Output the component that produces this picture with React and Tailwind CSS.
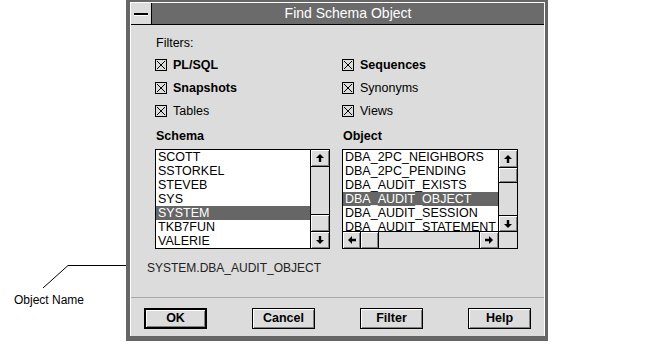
const font = { fontFamily: '"Liberation Sans", Arial, sans-serif' };

const schemas = ["SCOTT", "SSTORKEL", "STEVEB", "SYS", "SYSTEM", "TKB7FUN", "VALERIE"];
const objects = [
  "DBA_2PC_NEIGHBORS",
  "DBA_2PC_PENDING",
  "DBA_AUDIT_EXISTS",
  "DBA_AUDIT_OBJECT",
  "DBA_AUDIT_SESSION",
  "DBA_AUDIT_STATEMENT",
];

const bevel = "bg-[#dcdcdc] shadow-[inset_1px_1px_0_#fff,inset_-1px_-1px_0_#808080]";

function Arrow({ dir }) {
  const rot = { up: 0, down: 180, left: 270, right: 90 }[dir];
  return (
    <svg width="8" height="8" viewBox="0 0 8 8" style={{ transform: `rotate(${rot}deg)` }}>
      <path d="M4 0 L8 4 H5.2 V8 H2.8 V4 H0 Z" fill="black" />
    </svg>
  );
}

function Check({ label, bold }) {
  return (
    <div className="flex items-center gap-[6px] h-[14px]">
      <svg width="12" height="12" viewBox="0 0 12 12">
        <rect x="0.5" y="0.5" width="11" height="11" fill="none" stroke="black" />
        <path d="M2 2 L10 10 M10 2 L2 10" stroke="black" strokeWidth="1" />
      </svg>
      <span className={`text-[12.5px] leading-[14px] ${bold ? "font-bold" : ""}`}>{label}</span>
    </div>
  );
}

function Row({ text, selected }) {
  return (
    <div
      className={`h-[14px] leading-[14px] text-[12.5px] pl-[2px] whitespace-nowrap ${
        selected ? "bg-[#666] text-white" : "text-black"
      }`}
    >
      {text}
    </div>
  );
}

function Button({ label, isDefault }) {
  return (
    <div
      className={`w-[63px] h-[21px] flex items-center justify-center text-[12.5px] font-bold ${bevel} ${
        isDefault ? "border-2 border-black" : "border border-black"
      }`}
    >
      {label}
    </div>
  );
}

export default function App() {
  return (
    <div className="w-[656px] h-[344px] bg-white flex items-start text-black" style={font}>
      {/* callout */}
      <div className="w-[126px] flex flex-col">
        <svg width="126" height="293" viewBox="0 0 126 293" className="block">
          <path d="M43 288 L68 265.5 H126" fill="none" stroke="black" strokeWidth="1" />
        </svg>
        <div className="pl-[14px] text-[12px] leading-[14px]">Object Name</div>
      </div>

      {/* dialog */}
      <div className="w-[422px] h-[341px] bg-[#666] pt-[2px] pl-[4px] pr-[3px] pb-[5px] flex">
        <div className="flex-1 border border-white border-b-0 flex flex-col bg-[#dcdcdc]">
          {/* title bar */}
          <div className="h-[22px] flex border-b border-black">
            <div className="w-[21px] border-r border-black bg-[#dcdcdc] flex items-center justify-center">
              <div className="w-[14px] h-[2px] bg-black shadow-[0_1px_0_#fff]" />
            </div>
            <div className="flex-1 bg-[#6b6b6b] text-white text-[14px] flex items-center justify-center">
              Find Schema Object
            </div>
          </div>

          {/* body */}
          <div className="pl-[24px] pt-[11px] flex flex-col">
            <div className="ml-[1px] text-[12.5px] leading-[14px]">Filters:</div>
            <div className="grid grid-cols-[187px_1fr] gap-y-[9px] mt-[8px]">
              <Check label="PL/SQL" bold />
              <Check label="Sequences" bold />
              <Check label="Snapshots" bold />
              <Check label="Synonyms" />
              <Check label="Tables" />
              <Check label="Views" />
            </div>

            <div className="flex gap-[12px] mt-[11px]">
              {/* schema */}
              <div className="flex flex-col">
                <div className="ml-[1px] h-[14px] leading-[14px] text-[12.5px] font-bold">Schema</div>
                <div className="mt-[6px] w-[175px] h-[100px] border border-black bg-white flex">
                  <div className="flex-1 overflow-hidden">
                    {schemas.map((s) => (
                      <Row key={s} text={s} selected={s === "SYSTEM"} />
                    ))}
                  </div>
                  <div className="w-[19px] border-l border-black flex flex-col bg-[#dcdcdc]">
                    <div className={`h-[17px] border-b border-black flex items-center justify-center ${bevel}`}>
                      <Arrow dir="up" />
                    </div>
                    <div className="flex-1" />
                    <div className={`h-[17px] border-t border-black ${bevel}`} />
                    <div className={`h-[17px] border-t border-black flex items-center justify-center ${bevel}`}>
                      <Arrow dir="down" />
                    </div>
                  </div>
                </div>
              </div>

              {/* object */}
              <div className="flex flex-col">
                <div className="ml-[1px] h-[14px] leading-[14px] text-[12.5px] font-bold">Object</div>
                <div className="mt-[6px] w-[176px] h-[100px] border border-black bg-white flex flex-col">
                  <div className="flex-1 flex min-h-0">
                    <div className="flex-1 overflow-hidden">
                      {objects.map((o) => (
                        <Row key={o} text={o} selected={o === "DBA_AUDIT_OBJECT"} />
                      ))}
                    </div>
                    <div className="w-[19px] border-l border-black flex flex-col bg-[#dcdcdc]">
                      <div className={`h-[18px] border-b border-black flex items-center justify-center ${bevel}`}>
                        <Arrow dir="up" />
                      </div>
                      <div className={`h-[15px] border-b border-black ${bevel}`} />
                      <div className="flex-1" />
                      <div className={`h-[16px] border-t border-black flex items-center justify-center ${bevel}`}>
                        <Arrow dir="down" />
                      </div>
                    </div>
                  </div>
                  <div className="h-[17px] border-t border-black flex bg-[#dcdcdc]">
                    <div className={`w-[18px] border-r border-black flex items-center justify-center ${bevel}`}>
                      <Arrow dir="left" />
                    </div>
                    <div className={`w-[18px] border-r border-black ${bevel}`} />
                    <div className="flex-1" />
                    <div className={`w-[19px] border-l border-black flex items-center justify-center ${bevel}`}>
                      <Arrow dir="right" />
                    </div>
                    <div className="w-[19px] border-l border-black bg-[#dcdcdc]" />
                  </div>
                </div>
              </div>
            </div>

            <div className="-ml-[8px] mt-[12px] text-[12px] leading-[14px] text-[#222]">
              SYSTEM.DBA_AUDIT_OBJECT
            </div>
          </div>

          <div className="mt-[22px] h-px bg-[#a8a8a8]" />

          <div className="flex gap-[45px] pl-[13px] mt-[10px]">
            <Button label="OK" isDefault />
            <Button label="Cancel" />
            <Button label="Filter" />
            <Button label="Help" />
          </div>
        </div>
      </div>
    </div>
  );
}
